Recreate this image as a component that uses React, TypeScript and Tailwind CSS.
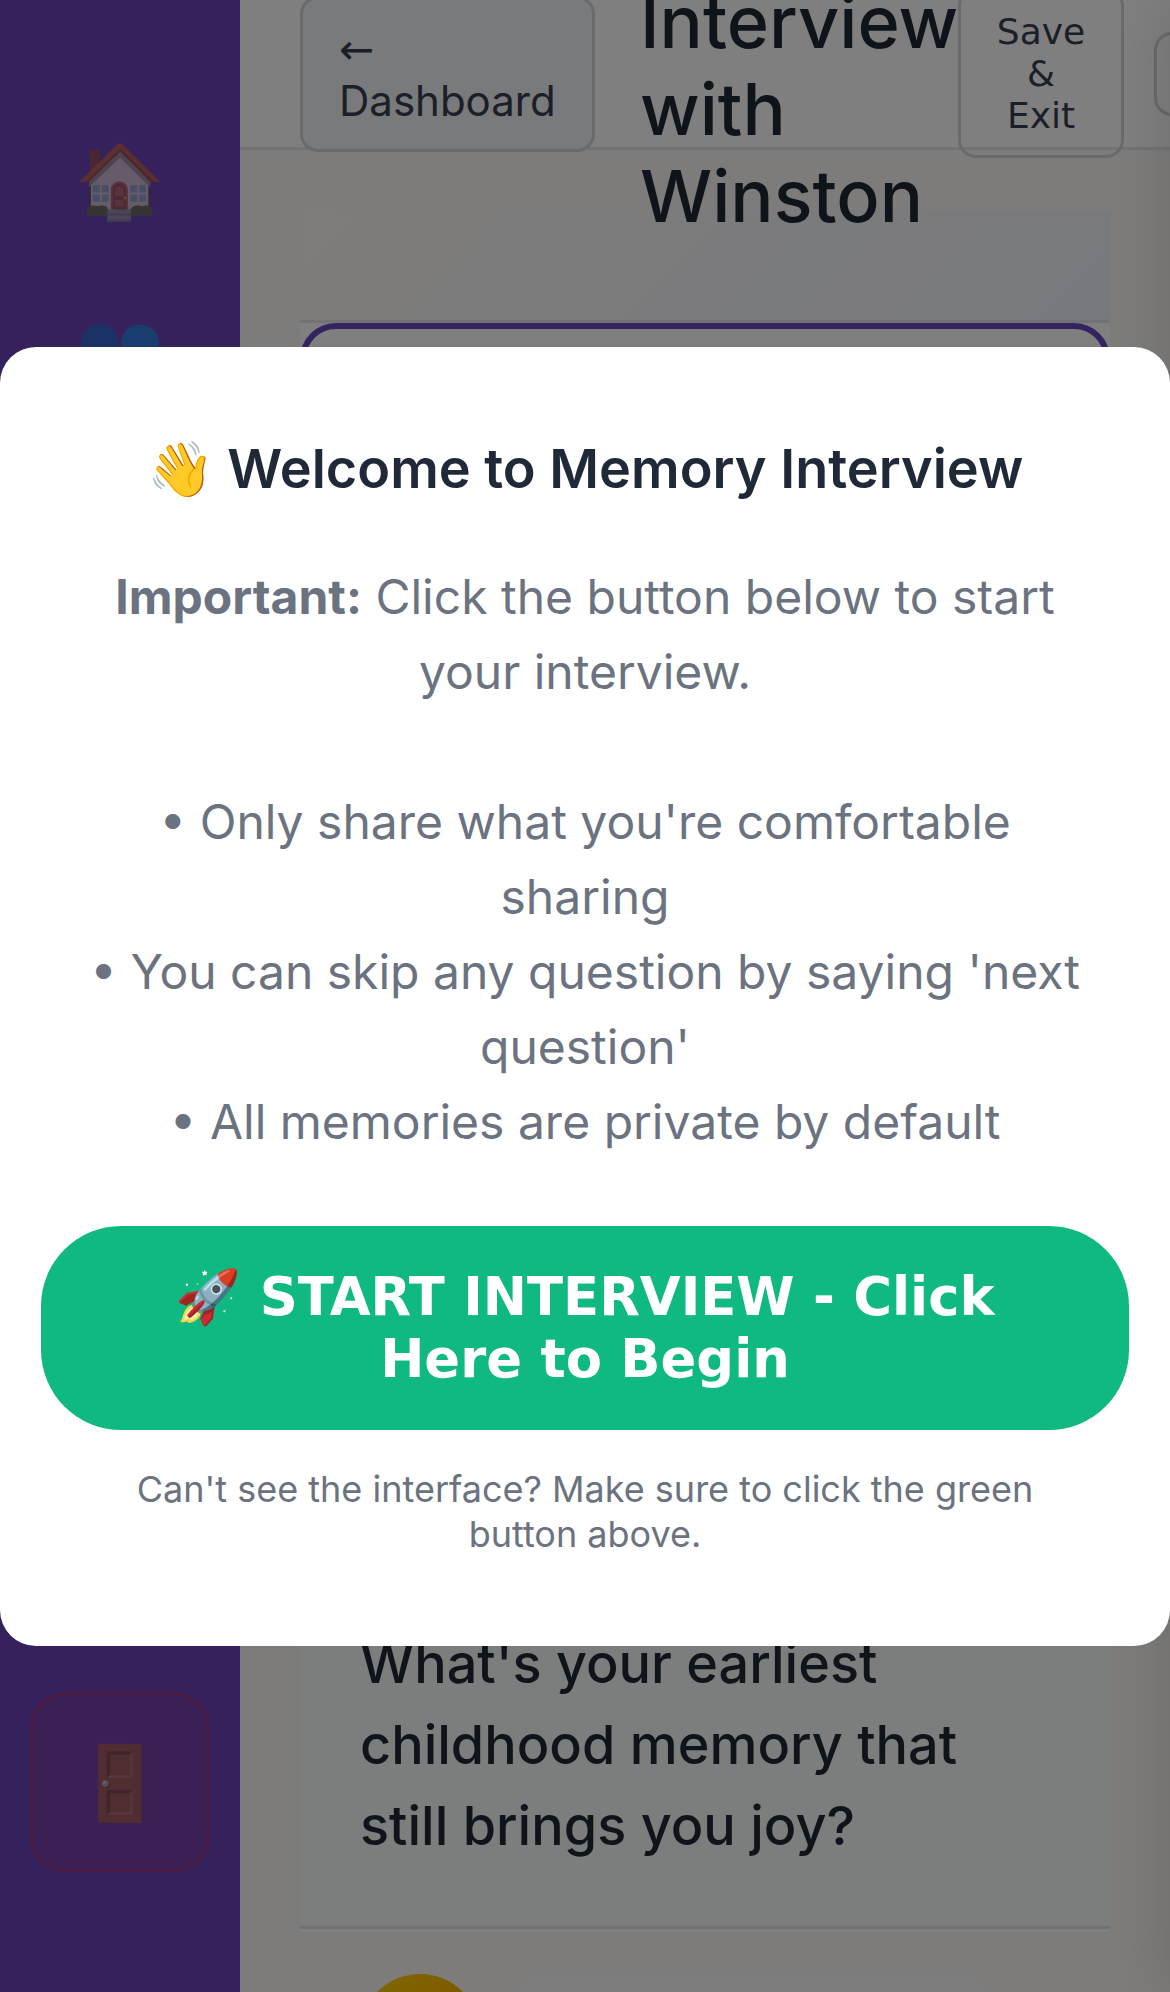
function Sidebar() {
  return (
    <aside className="flex h-full w-[240px] shrink-0 flex-col items-center justify-between bg-[#6b45bb] pb-[120px] pt-[90px]">
      <nav className="flex flex-col items-center text-[72px] leading-none">
        <div className="flex h-[180px] w-[180px] items-center justify-center opacity-65">🏠</div>
        <div className="-mt-[12px] flex h-[180px] w-[180px] items-center justify-center opacity-65">👥</div>
      </nav>
      <div className="flex h-[180px] w-[180px] items-center justify-center rounded-[36px] border-[3px] border-[#dc2626]/30 bg-[#dc2626]/10">
        <span className="text-[72px] leading-none opacity-70">🚪</span>
      </div>
    </aside>
  );
}

function Header() {
  return (
    <header className="relative flex h-[150px] items-start border-b-[3px] border-[#e5e7eb] bg-white pl-[60px]">
      <div className="-mt-[4px] flex h-[156px] w-[295px] shrink-0 flex-col justify-center rounded-[18px] border-[3px] border-[#d1d5db] bg-[#f3f4f6] pl-[36px] pt-[2px] text-[42px] leading-[51px] text-[#374151]">
        <span className="pt-[1px] font-['DejaVu_Sans'] leading-[50px]">←</span>
        <span>Dashboard</span>
      </div>
      <h1 className="-mt-[22px] ml-[45px] w-[318px] shrink-0 text-[72px] font-medium leading-[87px] text-[#1f2937]">
        Interview with Winston
      </h1>
      <div className="-mt-[12px] flex h-[170px] w-[166px] shrink-0 items-center justify-center rounded-[18px] border-[3px] border-[#d1d5db] pt-[2px] text-center font-['DejaVu_Sans'] text-[36px] leading-[42px] text-[#374151]">
        Save
        <br />&amp;
        <br />
        Exit
      </div>
      <div className="ml-[30px] mt-[32px] h-[84px] w-[120px] shrink-0 rounded-[18px] border-[3px] border-[#d1d5db]" />
    </header>
  );
}

function InterviewPage() {
  return (
    <main className="h-full w-[930px] overflow-hidden bg-[#fdf9f4]">
      <Header />
      <section className="mx-[60px] mt-[60px] bg-white">
        <div className="h-[113px] border-b-[3px] border-[#e5e7eb] bg-linear-135 from-[#fdfaf5] via-[#f6f7fa] to-[#f1f3fd]" />
        <div className="h-[1100px] rounded-[36px] border-[6px] border-[#6b46c1] bg-white" />
        <div className="mt-[200px] h-[306px] border-b-[3px] border-[#e2e5ea] bg-[#f9fafb] pl-[60px] text-[54px] font-medium leading-[81px] text-[#1f2937]">
          What&#39;s your earliest
          <br />
          childhood memory that
          <br />
          still brings you joy?
        </div>
        <div className="h-[3px] bg-white" />
      </section>
      <div className="flex gap-[30px] px-[120px] pt-[42px]">
        <div className="h-[120px] w-[120px] shrink-0 rounded-full bg-linear-135 from-[#ffd700] to-[#ff8c00]" />
        <div className="h-[240px] w-[480px] shrink-0 rounded-[36px] bg-[#fafafa]" />
      </div>
    </main>
  );
}

function WelcomeDialog() {
  return (
    <div className="absolute inset-0 flex items-start bg-black/50 pt-[347px]">
      <div className="h-[1299px] w-full rounded-[36px] bg-white px-[41px] text-center">
        <h2 className="mt-[89px] text-[54px] font-semibold leading-[65px] text-[#1f2937]">
          👋 Welcome to Memory Interview
        </h2>
        <p className="mt-[58px] text-[48px] leading-[75px] text-[#6b7280]">
          <strong className="font-bold">Important:</strong> Click the button below to start
          <br />
          your interview.
          <br />
          <br />• Only share what you&#39;re comfortable
          <br />
          sharing
          <br />• You can skip any question by saying &#39;next
          <br />
          question&#39;
          <br />• All memories are private by default
        </p>
        <button className="mt-[67px] block h-[204px] w-full rounded-[80px] bg-[#10b981] font-['DejaVu_Sans'] text-[52.8px] font-bold leading-[62px] text-white">
          🚀 START INTERVIEW - Click
          <br />
          Here to Begin
        </button>
        <p className="mt-[37px] text-[36px] leading-[45px] text-[#6b7280]">
          Can&#39;t see the interface? Make sure to click the green
          <br />
          button above.
        </p>
      </div>
    </div>
  );
}

export default function App() {
  return (
    <div className="relative flex h-[1992px] w-[1170px] overflow-hidden font-['Inter',sans-serif]">
      <Sidebar />
      <InterviewPage />
      <div className="absolute left-full top-0 h-full w-[300px] bg-white shadow-[0_0_60px_rgba(0,0,0,0.15)]" />
      <WelcomeDialog />
    </div>
  );
}
